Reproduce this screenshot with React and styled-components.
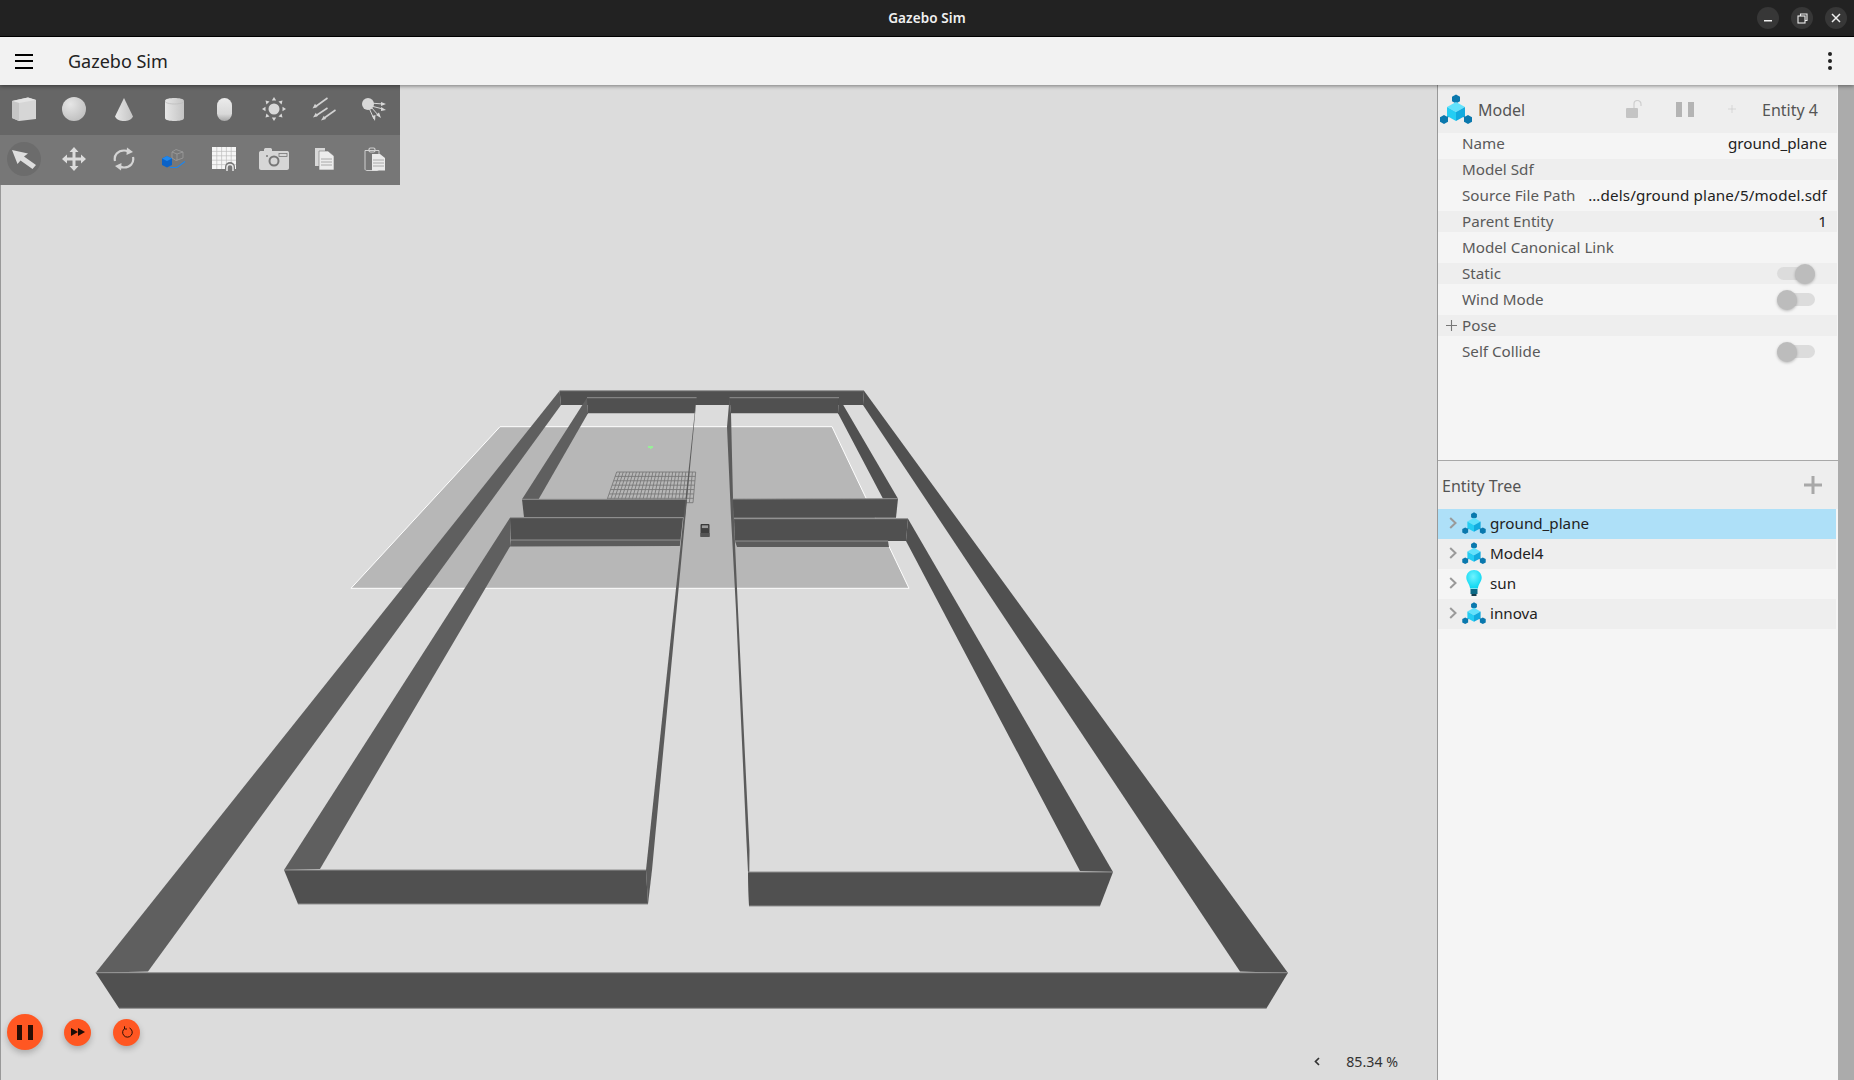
import React from "react";
import styled, { createGlobalStyle } from "styled-components";

const Global = createGlobalStyle`
  html, body { margin: 0; padding: 0; background: #dcdcdc; overflow: hidden; }
  * { box-sizing: border-box; }
  #root { width: 1854px; height: 1080px; font-family: "Noto Sans", "Open Sans", sans-serif; }
`;

const Page = styled.div`
  width: 1854px; height: 1080px; display: flex; flex-direction: column; overflow: hidden;
`;
const TitleBar = styled.header`
  height: 37px; flex: none; background: #222222; border-bottom: 1px solid #000;
  display: grid; grid-template-columns: 1fr auto 1fr; align-items: center;
`;
const WindowTitle = styled.div`
  grid-column: 2; color: #f0f0f0; font-size: 13.5px; font-weight: 600; letter-spacing: 0.1px;
`;
const WindowButtons = styled.div`
  grid-column: 3; display: flex; justify-content: flex-end; gap: 12px; padding-right: 7px;
`;
const WindowButton = styled.div`
  width: 22px; height: 22px; border-radius: 50%; background: #373737;
  display: flex; align-items: center; justify-content: center;
`;
const AppBar = styled.div`
  height: 48px; flex: none; background: #f2f2f2; display: flex; align-items: center;
  padding: 0 22px 0 15px; position: relative; z-index: 3;
  box-shadow: 0 1px 4px rgba(0,0,0,0.45);
`;
const Burger = styled.div`
  width: 18px; height: 15px; display: flex; flex-direction: column; justify-content: space-between;
  & > span { display: block; height: 2px; background: #000; }
`;
const AppTitle = styled.div`
  margin-left: 35px; font-size: 18px; color: #222; flex: 1;
`;
const Dots = styled.div`
  width: 4px; display: flex; flex-direction: column; gap: 3px;
  & > span { display: block; width: 4px; height: 4px; border-radius: 50%; background: #222; }
`;
const Main = styled.div`
  flex: 1; display: flex; min-height: 0;
`;
const Viewport = styled.section`
  width: 1437px; flex: none; position: relative; background: #dcdcdc; border-left: 1px solid #999;
`;
const Scene = styled.svg`
  position: absolute; left: -1px; top: 0; width: 1437px; height: 995px; display: block;
`;
const Toolbar = styled.div`
  position: absolute; left: -1px; top: 0; width: 400px;
`;
const ToolRow = styled.div`
  height: 50px; display: grid; grid-template-columns: repeat(8, 50px);
  background: ${p => p.$shade};
`;
const Tool = styled.div`
  display: flex; align-items: center; justify-content: center; padding: 0 2px 2px 0;
`;
const ActiveTool = styled(Tool)`
  & > div {
    width: 34px; height: 34px; border-radius: 50%; background: #6c6c6c;
    display: flex; align-items: center; justify-content: center;
  }
`;
const Playback = styled.div`
  position: absolute; left: 6px; bottom: 30px; display: flex; align-items: center;
`;
const PlayButton = styled.div`
  width: ${p => p.$size}px; height: ${p => p.$size}px; margin-right: ${p => p.$gap}px;
  border-radius: 50%; background: #ff5722; display: flex; align-items: center; justify-content: center;
  box-shadow: 0 3px 6px rgba(0,0,0,0.22);
`;
const Stats = styled.div`
  position: absolute; right: 39px; bottom: 9px; display: flex; align-items: center; gap: 26px;
  font-size: 14.2px; color: #333;
`;
const Panel = styled.aside`
  width: 417px; flex: none; display: flex; background: #f5f5f5; border-left: 1px solid #999;
`;
const PanelBody = styled.div`
  width: 400px; flex: none; display: flex; flex-direction: column;
`;
const Scrollbar = styled.div`
  width: 16px; margin-left: auto; background: #ababab;
`;
const Inspector = styled.div`
  height: 376px; flex: none; border-bottom: 1.5px solid #a8a8a8;
`;
const InspectorHead = styled.div`
  height: 48px; background: #eeeeee; display: grid; align-items: center;
  grid-template-columns: 38px 1fr 44px 58px 36px auto; padding: 0 19px 0 2px;
  font-size: 16px; color: #555; margin-right: 1px;
`;
const HeadCell = styled.div`
  display: flex; justify-content: ${p => (p.$start ? "flex-start" : "center")};
`;
const HeadText = styled.span`
  padding-top: 1px; margin-left: ${p => p.$offset || 0}px;
`;
const Rows = styled.div`
  display: flex; flex-direction: column; gap: 5px; margin-right: 1px;
`;
const Row = styled.div`
  height: 21px; display: flex; align-items: center; padding: 0 10px 2px 8px; font-size: 15.2px;
  background: ${p => (p.$shaded ? "#eeeeee" : "transparent")};
`;
const Lead = styled.span`
  width: 16px; flex: none; display: flex; align-items: center; padding-top: 2px;
`;
const Label = styled.span`
  color: #5a5a5a; flex: 1; white-space: nowrap;
`;
const Value = styled.span`
  color: #222; white-space: nowrap; letter-spacing: ${p => p.$spread || 0}px;
`;
const Track = styled.div`
  width: 38px; height: 13px; margin: 2px 12px 0 0; border-radius: 7px; background: #dcdcdc;
  display: flex; align-items: center; justify-content: ${p => (p.$on ? "flex-end" : "flex-start")};
`;
const Thumb = styled.div`
  width: 20px; height: 20px; flex: none; border-radius: 50%; background: #bcbcbc;
  box-shadow: 0 1px 3px rgba(0,0,0,0.25);
`;
const TreeHead = styled.div`
  height: 48px; background: #eeeeee; display: flex; align-items: center; justify-content: space-between;
  padding: 0 16px 0 4px; font-size: 16px; color: #555;
`;
const TreeHeadLabel = styled.span`
  padding-top: 2px;
`;
const TreeRow = styled.div`
  height: 30px; width: 398px; display: flex; align-items: center; padding: 0 0 2px 11px;
  font-size: 15.2px; color: #222; background: ${p => p.$bg};
`;
const TreeIcon = styled.span`
  width: 24px; height: 26px; margin: 0 4px 0 5px; display: flex; align-items: center; justify-content: center;
`;

const ModelIcon = ({ w = 32, h = 30 }) => (
  <svg width={w} height={h} viewBox="0 0 32 30">
    <g stroke="#0a78ad" strokeWidth="1.6">
      <line x1="16" y1="5" x2="16" y2="12" />
      <line x1="5" y1="25" x2="10" y2="21" />
      <line x1="27" y1="25" x2="22" y2="21" />
    </g>
    <polygon points="16,0.5 20,2.7 20,7.3 16,9.5 12,7.3 12,2.7" fill="#0a78ad" />
    <polygon points="4,21 8,23.2 8,27.8 4,30 0,27.8 0,23.2" fill="#0a78ad" />
    <polygon points="28,21 32,23.2 32,27.8 28,30 24,27.8 24,23.2" fill="#0a78ad" />
    <polygon points="16,8 25,13 16,18 7,13" fill="#62e2fc" />
    <polygon points="7,13 16,18 16,27 7,22" fill="#24cdf3" />
    <polygon points="16,18 25,13 25,22 16,27" fill="#12abdf" />
  </svg>
);

const BulbIcon = () => (
  <svg width="16" height="26" viewBox="0 0 16 26">
    <defs>
      <radialGradient id="bulb" cx="0.45" cy="0.35" r="0.7">
        <stop offset="0" stopColor="#6ff3ff" />
        <stop offset="1" stopColor="#00d4f0" />
      </radialGradient>
    </defs>
    <path d="M8 0C3.500 0 .3 3.400 .3 7.600c0 4 3.200 6 3.800 11h7.800c.6-5 3.800-7 3.800-11C15.700 3.400 12.500 0 8 0z" fill="url(#bulb)" />
    <rect x="4.500" y="19" width="7" height="5" fill="#0c6a86" />
    <rect x="5.500" y="24" width="5" height="2" fill="#143c4c" />
  </svg>
);

const Chevron = () => (
  <svg width="8" height="12" viewBox="0 0 8 12">
    <path d="M1.200 1 6.500 6 1.200 11" fill="none" stroke="#9a9a9a" strokeWidth="2" />
  </svg>
);

const wallDark = "#505050";
const wallSide = "#5f5f5f";
const polys = [
  ["559.6,390.7 864,390.7 863,405 561,405", wallDark],
  ["559.6,390.7 561,405 148,971.500 95.700,972.700", wallSide],
  ["864,390.7 1288,973 1240,971.500 863,405", wallDark],
  ["95.700,972.700 1288,972.700 1266.500,1008.300 119,1008.300", wallDark],
];
const roomPolys = [
  ["587,397.700 696.600,397.700 694.700,413.300 588,413.300", wallDark],
  ["587,397.700 588,413.300 538.600,499.300 522,499.300", wallSide],
  ["729.500,397.700 839,397.700 838,413.300 731,413.300", wallDark],
  ["839,397.700 898,498.700 883,498.700 838,413.300", wallDark],
];
const frontPolys = [
  ["522,499.300 686.700,499.300 685,517.300 524,517.300", wallDark],
  ["732.600,499 898,498.700 896,517.700 733.500,517.700", wallDark],
  ["696.600,398 652,870 648,904 646,870 694.700,413", "#5b5b5b"],
  ["729.500,398 731,413 733,499 738,610 749.500,850 749,906 748,872 746.400,840 736,610 731,517 727,427", "#5b5b5b"],
  ["510,517.700 683,517.700 680.500,540 510.600,540", wallDark],
  ["510.600,540 680.500,540 679.800,546 510,546.500", "#5c5c5c"],
  ["510,517.700 510,546.500 320,869 284,870", wallSide],
  ["734,518.700 908,518.700 906,541 735,541", wallDark],
  ["735,541 888,541 889,547 737,547", "#5c5c5c"],
  ["908,518.700 1113,872 1080,871 906,541", wallDark],
  ["284,870 646,870 648,904 298,904", wallDark],
  ["748,872 1113,872 1100,906 749,906", wallDark],
];
const edges = [
  [95.7, 972.7, 1288, 972.7], [119, 1008.3, 1266.5, 1008.3],
  [284, 870, 646, 870], [298, 904, 648, 904], [748, 872, 1113, 872], [749, 906, 1100, 906],
  [522, 499.3, 686.7, 499.3], [732.6, 499, 898, 498.7], [510, 517.7, 683, 517.7], [734, 518.7, 908, 518.7],
  [510.6, 540, 680.5, 540], [735, 541, 888, 541], [587, 397.7, 696.6, 397.7], [729.5, 397.7, 839, 397.7],
  [559.6, 390.7, 864, 390.7],
];

const gridLines = () => {
  const out = [];
  const cols = 24, rows = 7;
  for (let i = 0; i <= cols; i++) {
    const t = i / cols;
    out.push([616.7 + (695.7 - 616.7) * t, 472, 606 + (693 - 606) * t, 502.7]);
  }
  for (let j = 0; j <= rows; j++) {
    const t = j / rows;
    out.push([616.7 - 10.7 * t, 472 + 30.7 * t, 695.7 - 2.7 * t, 472 + 30.7 * t]);
  }
  return out;
};

const WorldScene = () => (
  <Scene viewBox="0 85 1437 995">
    <polygon points="500,426.700 832,426.700 909,588.300 351,588.300" fill="#b7b7b7" stroke="#ffffff" strokeWidth="1" />
    {polys.map(([p, f], i) => <polygon key={i} points={p} fill={f} />)}
    {roomPolys.map(([p, f], i) => <polygon key={i} points={p} fill={f} />)}
    <g stroke="#797979" strokeWidth="0.9">
      {gridLines().map((l, i) => <line key={i} x1={l[0]} y1={l[1]} x2={l[2]} y2={l[3]} />)}
    </g>
    <rect x="648" y="446" width="5" height="2" fill="#98ee98" />
    <rect x="650" y="448" width="1.500" height="1" fill="#98ee98" />
    {frontPolys.map(([p, f], i) => <polygon key={i} points={p} fill={f} />)}
    <g stroke="#8f8f8f" strokeWidth="1">
      {edges.map((l, i) => <line key={i} x1={l[0]} y1={l[1]} x2={l[2]} y2={l[3]} />)}
    </g>
    <rect x="700.500" y="524" width="9" height="13" rx="1" fill="#3f3f3f" />
    <rect x="701.500" y="525" width="7" height="3.500" fill="#9a9a9a" stroke="#2c2c2c" strokeWidth="0.6" />
    <rect x="700.500" y="533" width="9" height="4" fill="#555" />
  </Scene>
);

const iconGray = "#d8d8d8";
const IconDefs = () => (
  <svg width="0" height="0" style={{ position: "absolute" }}>
    <defs>
      <radialGradient id="sph" cx="0.35" cy="0.3" r="0.8">
        <stop offset="0" stopColor="#e6e6e6" />
        <stop offset="1" stopColor="#bdbdbd" />
      </radialGradient>
      <linearGradient id="cyl" x1="0" x2="1" y1="0" y2="0">
        <stop offset="0" stopColor="#e6e6e6" />
        <stop offset="1" stopColor="#c4c4c4" />
      </linearGradient>
      <linearGradient id="cap" x1="0" x2="0" y1="0" y2="1">
        <stop offset="0" stopColor="#ececec" />
        <stop offset="0.7" stopColor="#d8d8d8" />
        <stop offset="1" stopColor="#a8a8a8" />
      </linearGradient>
    </defs>
  </svg>
);
const BoxIcon = () => (
  <svg width="24" height="24" viewBox="0 0 24 24">
    <polygon points="0,4 16,0.500 24,3 24,22 7,24 0,21" fill="#d6d6d6" />
    <polygon points="0,4 7,6 24,3 16,0.500" fill="#e4e4e4" />
    <polygon points="7,6 7,24 0,21 0,4" fill="#c6c6c6" />
  </svg>
);
const SphereIcon = () => <svg width="24" height="24"><circle cx="12" cy="12" r="12" fill="url(#sph)" /></svg>;
const ConeIcon = () => (
  <svg width="18" height="23" viewBox="0 0 18 23">
    <path d="M9 0 18 18.500C16 22 13 23 9 23S2 22 0 18.500z" fill="url(#cyl)" />
  </svg>
);
const CylinderIcon = () => (
  <svg width="19" height="23" viewBox="0 0 19 23">
    <path d="M0 3C0 .8 5 0 9.500 0S19 .8 19 3V20C19 22.200 14 23 9.500 23S0 22.200 0 20z" fill="url(#cyl)" />
    <path d="M0 3C0 5 5 6 9.500 6S19 5 19 3" fill="none" stroke="#bdbdbd" strokeWidth="0.8" />
  </svg>
);
const CapsuleIcon = () => <svg width="15" height="23"><rect width="15" height="23" rx="7.500" fill="url(#cap)" /></svg>;
const SunIcon = () => (
  <svg width="24" height="24" viewBox="0 0 24 24" fill={iconGray}>
    <circle cx="12" cy="12" r="5.500" />
    {[0, 45, 90, 135, 180, 225, 270, 315].map(a => (
      <polygon key={a} points="12,0 14.200,3.500 9.800,3.500" transform={`rotate(${a} 12 12)`} />
    ))}
  </svg>
);
const DirectionalIcon = () => (
  <svg width="24" height="24" viewBox="0 0 24 24" stroke="#d2d2d2" strokeWidth="1.600" fill="#d2d2d2">
    <line x1="15.500" y1="1" x2="3" y2="10" />
    <line x1="15.500" y1="11" x2="3.500" y2="19" />
    <line x1="23.500" y1="13" x2="11.500" y2="21.500" />
    <polygon points="0.500,11.500 5.500,10 3,6.800" stroke="none" />
    <polygon points="1,20.500 6,19 3.800,15.800" stroke="none" />
    <polygon points="9,23.500 14,22 11.800,18.800" stroke="none" />
  </svg>
);
const SpotIcon = () => (
  <svg width="24" height="24" viewBox="0 0 24 24" fill="#d8d8d8" stroke="#d8d8d8" strokeWidth="1">
    <circle cx="6" cy="7" r="6" stroke="none" />
    <line x1="8" y1="6" x2="21" y2="7" />
    <line x1="9" y1="9" x2="21" y2="12" />
    <line x1="9" y1="10" x2="17" y2="19" />
    <line x1="7" y1="11" x2="12" y2="22" />
    <polygon points="24,7 19,5 19,9" stroke="none" />
    <polygon points="24,13 19,10 19,14" stroke="none" />
    <polygon points="19,21 14,18 17,15.500" stroke="none" />
    <polygon points="13,24 10,19 13.500,18" stroke="none" />
  </svg>
);
const ArrowIcon = () => (
  <svg width="24" height="19" viewBox="0 0 24 19">
    <path d="M0 0 16 3.500 12 6.500 24 15 20.500 19 8.500 10.500 5.500 14z" fill="#dedede" />
  </svg>
);
const MoveIcon = () => (
  <svg width="24" height="24" viewBox="0 0 24 24" fill="#dcdcdc">
    <polygon points="12,0 16.500,5 13.500,5 13.500,10.500 19,10.500 19,7.500 24,12 19,16.500 19,13.500 13.500,13.500 13.500,19 16.500,19 12,24 7.500,19 10.500,19 10.500,13.500 5,13.500 5,16.500 0,12 5,7.500 5,10.500 10.500,10.500 10.500,5 7.500,5" />
  </svg>
);
const RotateIcon = () => (
  <svg width="22" height="24" viewBox="0 0 22 24" fill="none" stroke="#d4d4d4" strokeWidth="2.200">
    <path d="M2 14C.6 8 5 3.500 11 3.500c2 0 3 .3 4 1" />
    <path d="M20 10c1.400 6-3 10.500-9 10.500-2 0-3-.3-4-1" />
    <polygon points="14,0.500 20,5 13.500,8" fill="#d4d4d4" stroke="none" />
    <polygon points="8,23.500 2,19 8.500,16" fill="#d4d4d4" stroke="none" />
  </svg>
);
const SnapIcon = () => (
  <svg width="24" height="20" viewBox="0 0 24 20">
    <g fill="none" stroke="#9d9d9d" strokeWidth="0.800">
      <polygon points="14,0.500 21,3 21,9 14,11.500 10,9 10,3" />
      <path d="M10 3 15 5 21 3M15 5V11.500" />
    </g>
    <path d="M8 18.500H15L23 12.500" fill="none" stroke="#1d86ee" strokeWidth="1.100" />
    <polygon points="5,7 10,9.500 10,16 5,18.500 0,16 0,9.500" fill="#0a62c8" />
    <polygon points="5,7 10,9.500 5,12 0,9.500" fill="#2088ee" />
  </svg>
);
const GridIcon = () => (
  <svg width="24" height="24" viewBox="0 0 24 24">
    <rect width="24" height="22" fill="#f6f6f6" />
    <g stroke="#bdbdbd" strokeWidth="0.700">
      {[4.800, 9.600, 14.400, 19.200].map(x => <line key={x} x1={x} y1="0" x2={x} y2="22" />)}
      {[4.400, 8.800, 13.200, 17.600].map(y => <line key={y} x1="0" y1={y} x2="24" y2={y} />)}
    </g>
    <path d="M13 24V20a5 5 0 0 1 10 0V24z" fill="#777" />
    <path d="M15 24V20.500a3 3 0 0 1 6 0V24" fill="none" stroke="#e6e6e6" strokeWidth="1.500" />
  </svg>
);
const CameraIcon = () => (
  <svg width="30" height="22" viewBox="0 0 30 22">
    <path d="M0 5C0 3.500 1 3 2 3H5V1.500C5 .5 6 0 7 0H11C12 0 13 .5 13 1.500V3H28C29 3 30 3.500 30 5V20C30 21 29 22 28 22H2C1 22 0 21 0 20z" fill="#d6d6d6" />
    <circle cx="15" cy="13" r="5.500" fill="#777" />
    <circle cx="15" cy="13" r="3.500" fill="#d6d6d6" />
    <rect x="20" y="5.500" width="8" height="3" fill="#d6d6d6" stroke="#777" strokeWidth="0.800" />
    <circle cx="8" cy="8" r="1" fill="#777" />
  </svg>
);
const DocsIcon = () => (
  <svg width="19" height="22" viewBox="0 0 19 22">
    <path d="M0 0H10V4H13V18H0z" fill="#d8d8d8" />
    <path d="M4 3H13L19 8V22H4z" fill="#ececec" stroke="#777" strokeWidth="0.600" />
    <g stroke="#999" strokeWidth="0.800"><line x1="6" y1="11" x2="17" y2="11" /><line x1="6" y1="14" x2="17" y2="14" /><line x1="6" y1="17" x2="17" y2="17" /></g>
  </svg>
);
const ClipIcon = () => (
  <svg width="21" height="24" viewBox="0 0 21 24">
    <path d="M1 3.500H15V22C15 23 14 23.500 13 23.500H3C2 23.500 1 23 1 22z" fill="none" stroke="#d0d0d0" strokeWidth="1" />
    <rect x="5" y="1" width="6" height="4" rx="1.500" fill="none" stroke="#d0d0d0" strokeWidth="1.200" />
    <path d="M8 7H16L21 11V23.500H8z" fill="#eaeaea" />
    <g stroke="#999" strokeWidth="0.800"><line x1="9" y1="13" x2="20" y2="13" /><line x1="9" y1="16" x2="20" y2="16" /><line x1="9" y1="19" x2="20" y2="19" /></g>
  </svg>
);

const topTools = [BoxIcon, SphereIcon, ConeIcon, CylinderIcon, CapsuleIcon, SunIcon, DirectionalIcon, SpotIcon];
const bottomTools = [MoveIcon, RotateIcon, SnapIcon, GridIcon, CameraIcon, DocsIcon, ClipIcon];

const Plus = ({ size, width, color }) => (
  <svg width={size} height={size} viewBox="0 0 18 18">
    <path d="M9 0V18M0 9H18" stroke={color} strokeWidth={width} fill="none" />
  </svg>
);

const entities = [
  { name: "ground_plane", bg: "#aee0f8" },
  { name: "Model4", bg: "#eeeeee" },
  { name: "sun", bg: "#f5f5f5", bulb: true },
  { name: "innova", bg: "#eeeeee" },
];

export default function App() {
  return (
    <Page>
      <Global />
      <IconDefs />
      <TitleBar>
        <WindowTitle>Gazebo Sim</WindowTitle>
        <WindowButtons>
          <WindowButton>
            <svg width="10" height="10"><rect x="1" y="7" width="8" height="1.500" fill="#eee" /></svg>
          </WindowButton>
          <WindowButton>
            <svg width="11" height="11" fill="none" stroke="#eee" strokeWidth="1.100">
              <rect x="1" y="3" width="7" height="7" /><path d="M3.500 3V1H10V7.500H8" />
            </svg>
          </WindowButton>
          <WindowButton>
            <svg width="10" height="10" stroke="#eee" strokeWidth="1.500"><path d="M1 1 9 9M9 1 1 9" /></svg>
          </WindowButton>
        </WindowButtons>
      </TitleBar>
      <AppBar>
        <Burger><span /><span /><span /></Burger>
        <AppTitle>Gazebo Sim</AppTitle>
        <Dots><span /><span /><span /></Dots>
      </AppBar>
      <Main>
        <Viewport>
          <WorldScene />
          <Toolbar>
            <ToolRow $shade="#666666">
              {topTools.map((I, i) => <Tool key={i}><I /></Tool>)}
            </ToolRow>
            <ToolRow $shade="#777777">
              <ActiveTool><div><ArrowIcon /></div></ActiveTool>
              {bottomTools.map((I, i) => <Tool key={i}><I /></Tool>)}
            </ToolRow>
          </Toolbar>
          <Playback>
            <PlayButton $size={36} $gap={21}>
              <svg width="16" height="15" fill="#2a0e04"><rect x="0" width="5" height="15" /><rect x="11" width="5" height="15" /></svg>
            </PlayButton>
            <PlayButton $size={27} $gap={22}>
              <svg width="14" height="8" fill="#1d0c06"><polygon points="0,0 7,4 0,8" /><polygon points="7,0 14,4 7,8" /></svg>
            </PlayButton>
            <PlayButton $size={27} $gap={0}>
              <svg width="12" height="12" fill="none" stroke="#2a0e04" strokeWidth="1"><path d="M4 2.200A4.800 4.800 0 1 0 8.500 2" /><path d="M3.500 .3V3H6" /></svg>
            </PlayButton>
          </Playback>
          <Stats>
            <svg width="6" height="9"><path d="M5 1 1.500 4.500 5 8" fill="none" stroke="#333" strokeWidth="1.700" /></svg>
            <span>85.34 %</span>
          </Stats>
        </Viewport>
        <Panel>
          <PanelBody>
            <Inspector>
              <InspectorHead>
                <HeadCell $start><ModelIcon /></HeadCell>
                <HeadText>Model</HeadText>
                <HeadCell>
                  <svg width="16" height="19" viewBox="0 0 16 19">
                    <rect x="0" y="8" width="12" height="10" rx="1" fill="#c4c4c4" />
                    <path d="M8 8V4a3.500 3.500 0 0 1 7 0V6" fill="none" stroke="#cfcfcf" strokeWidth="1.200" />
                  </svg>
                </HeadCell>
                <HeadCell>
                  <svg width="18" height="15"><rect width="6" height="15" fill="#b4b4b4" /><rect x="12" width="6" height="15" fill="#b4b4b4" /></svg>
                </HeadCell>
                <HeadCell><Plus size={8} width={1.800} color="#cfcfcf" /></HeadCell>
                <HeadText $offset={12}>Entity 4</HeadText>
              </InspectorHead>
              <Rows>
                <Row><Lead /><Label>Name</Label><Value>ground_plane</Value></Row>
                <Row $shaded><Lead /><Label>Model Sdf</Label></Row>
                <Row><Lead /><Label>Source File Path</Label><Value $spread={0.15}>…dels/ground plane/5/model.sdf</Value></Row>
                <Row $shaded><Lead /><Label>Parent Entity</Label><Value>1</Value></Row>
                <Row><Lead /><Label>Model Canonical Link</Label></Row>
                <Row $shaded><Lead /><Label>Static</Label><Track $on><Thumb /></Track></Row>
                <Row><Lead /><Label>Wind Mode</Label><Track><Thumb /></Track></Row>
                <Row $shaded><Lead><Plus size={11} width={1.800} color="#777" /></Lead><Label>Pose</Label></Row>
                <Row><Lead /><Label>Self Collide</Label><Track><Thumb /></Track></Row>
              </Rows>
            </Inspector>
            <TreeHead>
              <TreeHeadLabel>Entity Tree</TreeHeadLabel>
              <Plus size={18} width={3} color="#a8a8a8" />
            </TreeHead>
            {entities.map(e => (
              <TreeRow key={e.name} $bg={e.bg}>
                <Chevron />
                <TreeIcon>{e.bulb ? <BulbIcon /> : <ModelIcon w={24} h={22} />}</TreeIcon>
                {e.name}
              </TreeRow>
            ))}
          </PanelBody>
          <Scrollbar />
        </Panel>
      </Main>
    </Page>
  );
}
